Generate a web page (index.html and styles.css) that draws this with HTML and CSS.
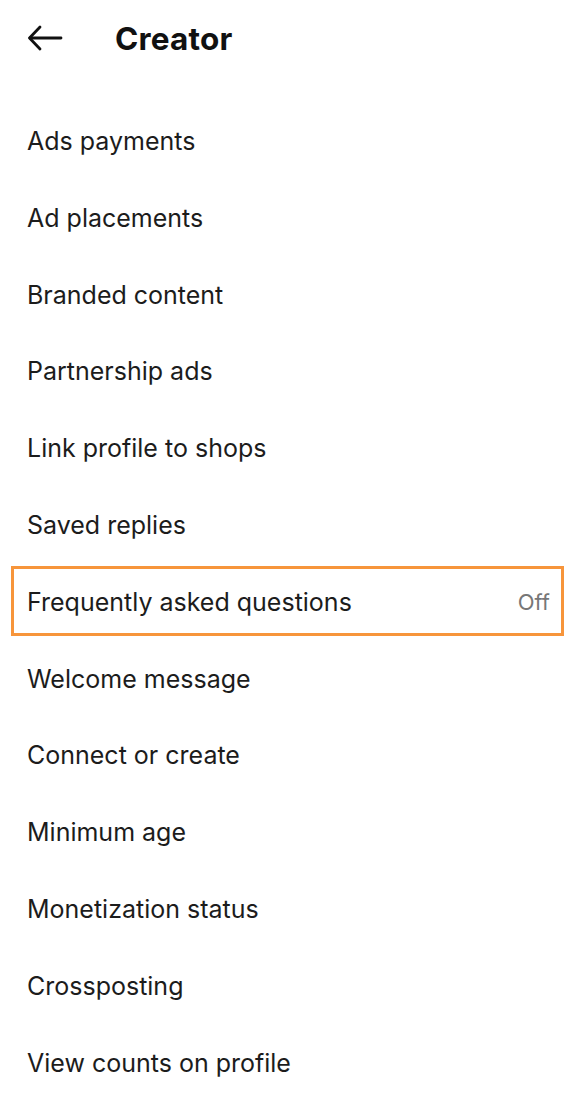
FILE: index.html
```html
<!DOCTYPE html>
<html>
<head>
<meta charset="utf-8">
<link rel="stylesheet" href="styles.css">
</head>
<body>
<div class="page">
  <header class="header">
    <svg class="back" width="36" height="26" viewBox="0 0 36 26" fill="none" stroke="#111" stroke-width="2.8" stroke-linecap="round" stroke-linejoin="round">
      <path d="M34 13H3"/>
      <path d="M13 2L2.5 13L13 24"/>
    </svg>
    <h1 class="title">Creator</h1>
  </header>
  <ul class="list">
    <li class="row">Ads payments</li>
    <li class="row">Ad placements</li>
    <li class="row">Branded content</li>
    <li class="row">Partnership ads</li>
    <li class="row">Link profile to shops</li>
    <li class="row">Saved replies</li>
    <li class="row highlight"><span>Frequently asked questions</span><span class="value">Off</span></li>
    <li class="row">Welcome message</li>
    <li class="row">Connect or create</li>
    <li class="row">Minimum age</li>
    <li class="row">Monetization status</li>
    <li class="row">Crossposting</li>
    <li class="row">View counts on profile</li>
  </ul>
</div>
</body>
</html>
```
FILE: styles.css
```css
* { box-sizing: border-box; }
html, body { margin: 0; padding: 0; background: #fff; }
body { font-family: Inter, "Noto Sans", sans-serif; color: #1c1c1c; }
.page { width: 576px; height: 1104px; overflow: hidden; }
.header {
  height: 76px;
  display: flex;
  align-items: center;
  padding-left: 27px;
}
.back { display: block; }
.title {
  margin: 0 0 0 52px;
  font-size: 31.5px;
  font-weight: 700;
  color: #111;
  letter-spacing: 0.2px;
}
.list { list-style: none; margin: 26.6px 0 0; padding: 0; }
.row {
  height: 76.8px;
  display: flex;
  align-items: center;
  justify-content: space-between;
  padding: 0 26px 0 27px;
  font-size: 25px;
  font-weight: 400;
  position: relative;
}
.value { color: #777; font-size: 22px; }
.highlight::after {
  content: "";
  position: absolute;
  left: 11px;
  right: 12px;
  top: 3px;
  bottom: 4px;
  border: 3px solid #f7953b;
}
```
